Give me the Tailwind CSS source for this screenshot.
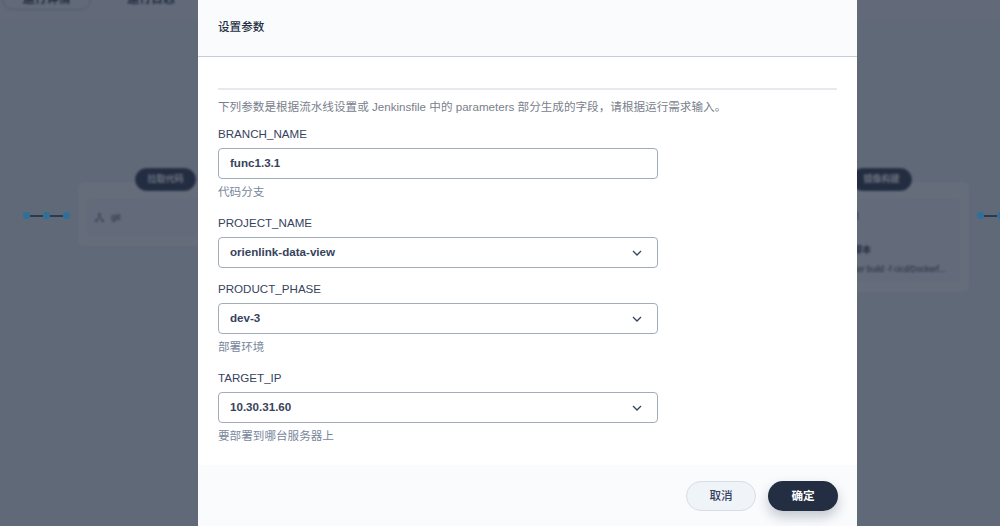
<!DOCTYPE html>
<html lang="zh-CN">
<head>
  <meta charset="UTF-8" />
  <title>设置参数</title>
  <script src="https://cdn.jsdelivr.net/npm/@tailwindcss/browser@4"></script>
</head>
<body class="m-0 h-[526px] w-[1000px] overflow-hidden bg-[#eff4f9] font-['Liberation_Sans','Noto_Sans_CJK_SC',sans-serif]">
  <div class="relative h-[526px] w-[1000px] overflow-hidden">
    <!-- page behind the dialog -->
    <div class="absolute inset-0">
      <div class="flex h-[22px] items-start border-b border-[#e8edf2] bg-[#f4f7fa]">
        <div class="-mt-[12px] ml-[2px] flex h-[22px] w-[89px] items-center justify-center rounded-[14px] border border-[#bcc5cf] text-xs font-bold text-[#242e42]">运行详情</div>
        <div class="-mt-[12px] ml-[36px] flex h-[22px] items-center text-xs font-bold text-[#242e42]">运行日志</div>
      </div>
      <div class="absolute left-[78px] top-[182px] h-[64px] w-[170px] rounded-[6px] bg-white pl-[8px] pt-[16px]">
        <div class="flex h-[39px] items-center gap-[7px] rounded bg-[#f9fbfd] pl-[9px] text-[9px] font-medium text-[#242e42]">
          <svg class="size-[9px]" viewBox="0 0 10 10" fill="none" stroke="#242e42" stroke-width="1"><circle cx="5" cy="1.5" r="1"/><circle cx="1.5" cy="8.5" r="1"/><circle cx="8.5" cy="8.5" r="1"/><path d="M5 2.5v2.5M2.2 7.2L5 5l2.8 2.2"/></svg>
          <span>git</span>
        </div>
      </div>
      <div class="absolute left-[135px] top-[168px] flex h-[23px] w-[61px] items-center justify-center rounded-full border border-[#36435c] bg-[#242e42] text-[9px] font-bold text-white">拉取代码</div>
      <div class="absolute left-[814px] top-[182px] h-[110px] w-[155px] rounded-[6px] bg-white pl-[9px] pr-[9px] pt-[16px]">
        <div class="h-[85px] rounded bg-[#f9fbfd] pl-[17px] pt-[12px] text-[#242e42]">
          <div class="text-[9.5px] leading-[12px]">镜像</div>
          <div class="mt-[22px] text-[9px] font-bold leading-[12px]">sh 脚本</div>
          <div class="mt-[8px] whitespace-nowrap text-[8.2px] leading-[12px]">docker build -f cicd/Dockerf...</div>
        </div>
      </div>
      <div class="absolute left-[851px] top-[168px] flex h-[23px] w-[61px] items-center justify-center rounded-full border border-[#36435c] bg-[#242e42] text-[9px] font-bold text-white">镜像构建</div>
    </div>
    <div class="absolute inset-0 bg-[#232d41]/70 backdrop-blur-[1px]"></div>

    <!-- pipeline connectors stay bright over the overlay -->
    <div class="absolute left-[23px] top-[212px] flex items-center">
      <span class="size-[7px] rounded-full bg-[#2e7099]"></span><span class="h-[2px] w-[13px] bg-[#2c3a50]"></span><span class="size-[7px] rounded-full bg-[#2e7099]"></span><span class="h-[2px] w-[13px] bg-[#2c3a50]"></span><span class="size-[7px] rounded-full bg-[#2e7099]"></span>
    </div>
    <div class="absolute left-[977px] top-[212px] flex items-center">
      <span class="size-[7px] rounded-full bg-[#2e7099]"></span><span class="h-[2px] w-[13px] bg-[#2c3a50]"></span><span class="size-[7px] rounded-full bg-[#2e7099]"></span>
    </div>

    <!-- dialog -->
    <div class="absolute left-[198px] top-[-4px] flex h-[534px] w-[659px] flex-col bg-white text-[11.6px]">
      <div class="flex h-[61px] shrink-0 items-center border-b border-[#c3ccd8] bg-[#f9fbfd] pl-[20px] pt-[2px]">
        <h2 class="font-medium leading-[20px] text-[#242e42]">设置参数</h2>
      </div>
      <div class="flex-1 px-[20px]">
        <div class="mt-[31px] h-[2px] bg-[#e6e9ed]"></div>
        <p class="mt-[6px] translate-y-px leading-[20px] text-[#79808c]">下列参数是根据流水线设置或 Jenkinsfile 中的 parameters 部分生成的字段，请根据运行需求输入。</p>

        <div class="mt-[7px] w-[440px]">
          <label class="block translate-y-px leading-[20px] text-[#36435c]">BRANCH_NAME</label>
          <div class="mt-[5px] flex h-[31px] items-center rounded border border-[#a3adba] pb-[2px] pl-[11px] font-bold text-[#36435c]">func1.3.1</div>
          <p class="mt-[2px] translate-y-px leading-[20px] text-[#79879c]">代码分支</p>
        </div>

        <div class="mt-[11px] w-[440px]">
          <label class="block translate-y-px leading-[20px] text-[#36435c]">PROJECT_NAME</label>
          <div class="mt-[5px] flex h-[31px] items-center justify-between rounded border border-[#a3adba] pb-[2px] pl-[11px] pr-[12px] font-bold text-[#36435c]">
            <span>orienlink-data-view</span>
            <svg class="size-[16px] translate-y-px" viewBox="0 0 16 16" fill="none" stroke="#36435c" stroke-width="1.3"><path d="M4 6l4 4 4-4"/></svg>
          </div>
        </div>

        <div class="mt-[10px] w-[440px]">
          <label class="block translate-y-px leading-[20px] text-[#36435c]">PRODUCT_PHASE</label>
          <div class="mt-[5px] flex h-[31px] items-center justify-between rounded border border-[#a3adba] pb-[2px] pl-[11px] pr-[12px] font-bold text-[#36435c]">
            <span>dev-3</span>
            <svg class="size-[16px] translate-y-px" viewBox="0 0 16 16" fill="none" stroke="#36435c" stroke-width="1.3"><path d="M4 6l4 4 4-4"/></svg>
          </div>
          <p class="mt-[2px] translate-y-px leading-[20px] text-[#79879c]">部署环境</p>
        </div>

        <div class="mt-[11px] w-[440px]">
          <label class="block translate-y-px leading-[20px] text-[#36435c]">TARGET_IP</label>
          <div class="mt-[5px] flex h-[31px] items-center justify-between rounded border border-[#a3adba] pb-[2px] pl-[11px] pr-[12px] font-bold text-[#36435c]">
            <span>10.30.31.60</span>
            <svg class="size-[16px] translate-y-px" viewBox="0 0 16 16" fill="none" stroke="#36435c" stroke-width="1.3"><path d="M4 6l4 4 4-4"/></svg>
          </div>
          <p class="mt-[2px] translate-y-px leading-[20px] text-[#79879c]">要部署到哪台服务器上</p>
        </div>
      </div>
      <div class="flex h-[65px] shrink-0 items-start justify-end gap-[12px] bg-[#f9fbfd] pr-[19px] pt-[16px]">
        <button class="h-[30px] w-[70px] rounded-full border border-[#d8dee5] bg-[#eff4f9] font-medium text-[#36435c]">取消</button>
        <button class="h-[30px] w-[70px] rounded-full bg-[#242e42] font-bold text-white shadow-[0_6px_12px_rgba(36,46,66,0.25)]">确定</button>
      </div>
    </div>
  </div>
</body>
</html>
